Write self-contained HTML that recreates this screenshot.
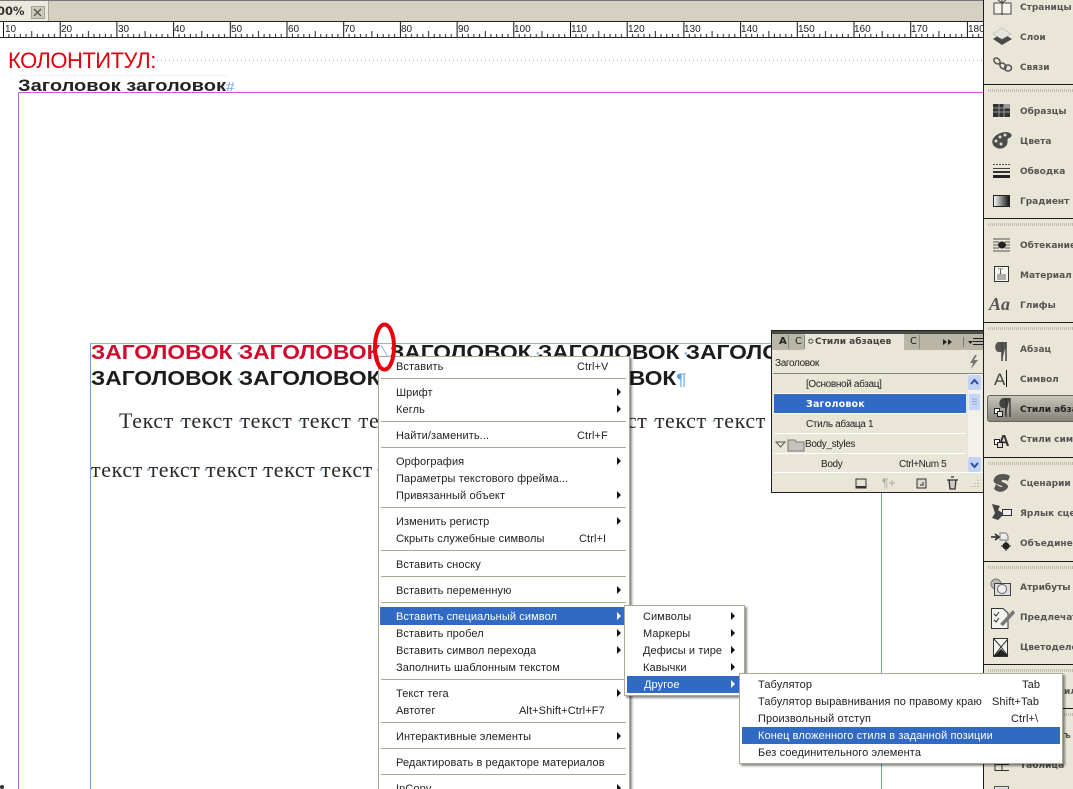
<!DOCTYPE html>
<html lang="ru"><head><meta charset="utf-8"><title>InDesign</title>
<style>
html,body{margin:0;padding:0;background:#fff}
#r{position:relative;width:1073px;height:789px;overflow:hidden;background:#fff;font-family:"Liberation Sans",sans-serif}
#r div,#r svg{position:absolute}
.t{white-space:pre}
.h{font:bold 20px/26px "Liberation Sans",sans-serif;color:#1c1c1c;white-space:pre;transform:scaleX(1.138);transform-origin:0 0}
.s{font:22px/26px "Liberation Serif",serif;color:#2a2a2a;white-space:pre;letter-spacing:.6px}
.h i,.s i{font-style:normal;font-weight:normal;color:#8fa9d0;display:inline-block;width:0;position:relative;left:-.17em}
.m{font:11px/17px "Liberation Sans",sans-serif;color:#222;white-space:pre;height:17px;letter-spacing:.1px;margin-top:2px}
.n{font-size:10px;letter-spacing:-.35px}
.w{color:#fff}
.ar{width:0;height:0;border-left:4px solid #111;border-top:4px solid transparent;border-bottom:4px solid transparent}
.ms{height:1px;background:#aca899}
.hl{background:#316ac5}
.d{left:984px;width:89px;height:1px;background:#1c1c1c}
.o{left:988px;width:85px;height:3px;background:repeating-linear-gradient(90deg,#b5b2a4 0 1px,transparent 1px 2px);opacity:.8}
.l{left:1020px;font:bold 9px/14px "DejaVu Sans",sans-serif;color:#555552;white-space:pre;letter-spacing:0;width:53px;overflow:hidden;margin-top:2px}
.p{font:10px/14px "DejaVu Sans",sans-serif;color:#222;white-space:pre}
</style></head><body><div id="r">

<!-- tab bar -->
<div style="left:0;top:0;width:984px;height:21px;background:#d4d1c2;border-top:1px solid #777;box-sizing:border-box"></div>
<div style="left:0;top:1px;width:48px;height:21px;background:#ebe9dd;border-right:1px solid #a8a698"></div>
<div class="t" style="left:-3px;top:4px;font:bold 11.5px/14px 'DejaVu Sans',sans-serif;color:#333;letter-spacing:0">00%</div>
<div style="left:31px;top:6px;width:12px;height:11px;background:#ccc9ba;border:1px solid #a5a396"></div>
<svg style="left:33px;top:8px" width="9" height="9"><path d="M1 1L8 8M8 1L1 8" stroke="#555" stroke-width="1.3"/></svg>

<!-- ruler -->
<svg style="left:0;top:21px" width="984" height="17">
<defs><pattern id="tk" x="3" y="0" width="56.7" height="17" patternUnits="userSpaceOnUse">
<path d="M0.5 0V16" stroke="#111"/>
<path d="M5.9 13V16M11.6 13V16M17.3 13V16M23 13V16M34.3 13V16M40 13V16M45.7 13V16M51.4 13V16" stroke="#222"/>
<path d="M28.7 10V16" stroke="#222"/>
</pattern></defs>
<rect width="984" height="17" fill="#fff"/>
<rect width="984" height="17" fill="url(#tk)"/>
<path d="M0 .5H984M0 16.5H984" stroke="#222"/>
<g font-family="Liberation Sans" font-size="10" fill="#222">
<text x="5" y="11">10</text><text x="61" y="11">20</text><text x="118" y="11">30</text><text x="174" y="11">40</text><text x="231" y="11">50</text><text x="288" y="11">60</text><text x="344" y="11">70</text><text x="401" y="11">80</text><text x="458" y="11">90</text><text x="514" y="11">100</text><text x="571" y="11">110</text><text x="628" y="11">120</text><text x="684" y="11">130</text><text x="741" y="11">140</text><text x="798" y="11">150</text><text x="854" y="11">160</text><text x="911" y="11">170</text><text x="968" y="11">180</text>
</g></svg>

<!-- page guides -->
<div style="left:157px;top:60px;width:826px;height:1px;background:repeating-linear-gradient(90deg,#8fa9d0 0 1px,transparent 1px 4px)"></div>
<div style="left:18px;top:92px;width:966px;height:1px;background:#c95fcf"></div>
<div style="left:18px;top:92px;width:1px;height:697px;background:#b468cc"></div>
<div style="left:90px;top:343px;width:1px;height:446px;background:#6f9fd8"></div>
<div style="left:90px;top:343px;width:682px;height:1px;background:#8fb4e0"></div>
<div style="left:881px;top:492px;width:1px;height:297px;background:#6f9fd8"></div>
<div style="left:18px;top:75px;width:209px;height:1px;background:#eef1f7"></div>
<div style="left:0;top:785px;width:4px;height:4px;background:#333;border-radius:2px"></div>

<div class="t" style="left:8px;top:48px;font:22px/26px 'Liberation Sans',sans-serif;color:#e1000f;letter-spacing:-.5px">КОЛОНТИТУЛ:</div>
<div class="t" style="left:18px;top:76px;font:bold 17px/20px 'Liberation Sans',sans-serif;color:#222;transform:scaleX(1.18);transform-origin:0 0">Заголовок заголовок<span style="color:#6f9fd8;font-weight:normal;font-size:13px">#</span></div>

<!-- headings -->
<div class="h" style="left:91px;top:340px;color:#cf0a2c">ЗАГОЛОВОК <i>·</i>ЗАГОЛОВОК</div>
<div class="h" style="left:390px;top:340px">ЗАГОЛОВОК <i>·</i>ЗАГОЛОВОК <i>·</i>ЗАГОЛО</div>
<div class="h" style="left:91px;top:366px">ЗАГОЛОВОК <i>·</i>ЗАГОЛОВОК <i>·</i>ЗАГОЛОВОК <i>·</i>ЗАГОЛОВОК<span style="color:#5f9fe0;font-weight:normal;font-size:17px">¶</span></div>
<svg style="left:378px;top:343px" width="14" height="14"><path d="M3 2L10 14" stroke="#8fb4e0" fill="none"/></svg>

<!-- body -->
<div class="s" style="left:119px;top:408px;word-spacing:1.2px">Текст <i>·</i>текст <i>·</i>текст <i>·</i>текст <i>·</i>текст <i>·</i>текст <i>·</i>текст <i>·</i>текст <i>·</i>текст <i>·</i>текст <i>·</i>текст</div>
<div class="s" style="left:91px;top:457px;word-spacing:-.5px">текст <i>·</i>текст <i>·</i>текст <i>·</i>текст <i>·</i>текст <i>·</i>текст</div>

<!-- main menu -->
<div style="left:378px;top:356px;width:252px;height:440px;background:#fff;border:1px solid #aca899;box-sizing:border-box;box-shadow:2px 2px 2px rgba(0,0,0,.45)"></div>
<div class="m" style="left:396px;top:357px">Вставить</div><div class="m" style="left:577px;top:357px">Ctrl+V</div>
<div class="ms" style="left:381px;top:378px;width:245px"></div>
<div class="m" style="left:396px;top:383px">Шрифт</div><div class="ar" style="left:617px;top:388px"></div>
<div class="m" style="left:396px;top:400px">Кегль</div><div class="ar" style="left:617px;top:405px"></div>
<div class="ms" style="left:381px;top:421px;width:245px"></div>
<div class="m" style="left:396px;top:426px">Найти/заменить...</div><div class="m" style="left:577px;top:426px">Ctrl+F</div>
<div class="ms" style="left:381px;top:447px;width:245px"></div>
<div class="m" style="left:396px;top:452px">Орфография</div><div class="ar" style="left:617px;top:457px"></div>
<div class="m" style="left:396px;top:469px">Параметры текстового фрейма...</div>
<div class="m" style="left:396px;top:486px">Привязанный объект</div><div class="ar" style="left:617px;top:491px"></div>
<div class="ms" style="left:381px;top:507px;width:245px"></div>
<div class="m" style="left:396px;top:512px">Изменить регистр</div><div class="ar" style="left:617px;top:517px"></div>
<div class="m" style="left:396px;top:529px">Скрыть служебные символы</div><div class="m" style="left:579px;top:529px">Ctrl+I</div>
<div class="ms" style="left:381px;top:550px;width:245px"></div>
<div class="m" style="left:396px;top:555px">Вставить сноску</div>
<div class="ms" style="left:381px;top:576px;width:245px"></div>
<div class="m" style="left:396px;top:581px">Вставить переменную</div><div class="ar" style="left:617px;top:586px"></div>
<div class="ms" style="left:381px;top:602px;width:245px"></div>
<div class="hl" style="left:380px;top:607px;width:247px;height:18px"></div>
<div class="m w" style="left:396px;top:607px">Вставить специальный символ</div><div class="ar" style="left:617px;top:612px;border-left-color:#fff"></div>
<div class="m" style="left:396px;top:624px">Вставить пробел</div><div class="ar" style="left:617px;top:629px"></div>
<div class="m" style="left:396px;top:641px">Вставить символ перехода</div><div class="ar" style="left:617px;top:646px"></div>
<div class="m" style="left:396px;top:658px">Заполнить шаблонным текстом</div>
<div class="ms" style="left:381px;top:679px;width:245px"></div>
<div class="m" style="left:396px;top:684px">Текст тега</div><div class="ar" style="left:617px;top:689px"></div>
<div class="m" style="left:396px;top:701px">Автотег</div><div class="m" style="left:519px;top:701px">Alt+Shift+Ctrl+F7</div>
<div class="ms" style="left:381px;top:722px;width:245px"></div>
<div class="m" style="left:396px;top:727px">Интерактивные элементы</div><div class="ar" style="left:617px;top:732px"></div>
<div class="ms" style="left:381px;top:748px;width:245px"></div>
<div class="m" style="left:396px;top:753px">Редактировать в редакторе материалов</div>
<div class="ms" style="left:381px;top:774px;width:245px"></div>
<div class="m" style="left:396px;top:779px">InCopy</div><div class="ar" style="left:617px;top:784px"></div>

<!-- red ellipse -->
<svg style="left:372px;top:321px" width="26" height="52"><ellipse cx="12.5" cy="26" rx="9.500" ry="22.500" fill="none" stroke="#e8000c" stroke-width="4"/></svg>

<!-- panel -->
<div style="left:771px;top:330px;width:213px;height:163px;background:#e9e6d8;border:1px solid #222;border-right:0;box-sizing:border-box"></div>
<div style="left:772px;top:334px;width:211px;height:16px;background:#b9b6a6"></div>
<div style="left:772px;top:331px;width:211px;height:3px;background:#4a4a46"></div>
<div style="left:804px;top:334px;width:100px;height:17px;background:#e9e6d8"></div>
<div class="p" style="left:779px;top:335px;font-weight:bold">A</div>
<div style="left:788px;top:335px;width:1px;height:14px;background:#888"></div>
<div class="p" style="left:795px;top:335px">С</div>
<div style="left:804px;top:335px;width:1px;height:14px;background:#888"></div>
<div class="p" style="left:807px;top:335px;font-size:9px;color:#333">≎</div>
<div class="p" style="left:815px;top:335px;font-weight:bold;font-size:9px;color:#444">Стили абзацев</div>
<div class="p" style="left:910px;top:335px">С</div>
<div style="left:919px;top:335px;width:1px;height:14px;background:#888"></div>
<svg style="left:940px;top:336px" width="44" height="12"><path d="M3 3L7 6L3 9ZM8 3L12 6L8 9Z" fill="#222"/><path d="M23.500 1V11" stroke="#777"/><path d="M28 5L33 5L30.500 8Z" fill="#222"/><path d="M33 2.500H43M33 5.500H43M33 8.500H43" stroke="#222"/></svg>
<div class="m n" style="left:775px;top:353px">Заголовок</div>
<svg style="left:968px;top:354px" width="12" height="16"><path d="M7 1L2 9H5L3 15L10 6H6L9 1Z" fill="#777"/></svg>
<div style="left:773px;top:373px;width:210px;height:1px;background:#888"></div>
<div class="hl" style="left:774px;top:394px;width:192px;height:19px"></div>
<div style="left:774px;top:393px;width:192px;height:1px;background:#fff"></div>
<div style="left:774px;top:413px;width:192px;height:1px;background:#fff"></div>
<div style="left:774px;top:433px;width:192px;height:1px;background:#fff"></div>
<div style="left:774px;top:453px;width:192px;height:1px;background:#fff"></div>
<div style="left:774px;top:472px;width:209px;height:1px;background:#fff"></div>
<div class="m n" style="left:806px;top:374px">[Основной абзац]</div>
<div class="m w" style="left:806px;top:394px;font:bold 9.500px/17px 'DejaVu Sans',sans-serif;letter-spacing:.2px">Заголовок</div>
<div class="m n" style="left:806px;top:414px">Стиль абзаца 1</div>
<div class="m n" style="left:805px;top:434px">Body_styles</div>
<div class="m n" style="left:821px;top:454px">Body</div>
<div class="m n" style="left:899px;top:454px">Ctrl+Num 5</div>
<svg style="left:775px;top:437px" width="30" height="15"><path d="M1 5H10L5.500 10Z" fill="none" stroke="#555"/><path d="M13 3H20L21 5H29V14H13Z" fill="#c5c3bb" stroke="#777"/></svg>
<div style="left:968px;top:374px;width:14px;height:98px;background:#f3f2ea"></div>
<div style="left:968px;top:375px;width:13px;height:15px;background:#c3d3f5;border-radius:2px"></div>
<svg style="left:968px;top:375px" width="13" height="15"><path d="M3 9L6.500 5L10 9" stroke="#2d4f9e" stroke-width="2" fill="none"/></svg>
<div style="left:968px;top:393px;width:13px;height:18px;background:#c8d6f6;border-radius:2px;border:1px solid #e8edf9;box-sizing:border-box"></div>
<svg style="left:968px;top:393px" width="13" height="18"><path d="M4 6H9M4 8.500H9M4 11H9" stroke="#8fa6dc"/></svg>
<div style="left:968px;top:457px;width:13px;height:15px;background:#c3d3f5;border-radius:2px"></div>
<svg style="left:968px;top:457px" width="13" height="15"><path d="M3 6L6.500 10L10 6" stroke="#2d4f9e" stroke-width="2" fill="none"/></svg>
<svg style="left:850px;top:474px" width="132" height="17">
<path d="M6 5H16V14H6Z" fill="#e5e3d8" stroke="#333"/><path d="M6 13H16" stroke="#333" stroke-width="2"/>
<text x="32" y="13" font-size="12" fill="#a5a498" font-family="Liberation Sans">¶+</text>
<rect x="67" y="5" width="9" height="9" fill="#dcdad0" stroke="#333"/><path d="M70 11H73V8" stroke="#333" fill="none"/>
<path d="M97 6H108M99 6L100 15H105L106 6M101 3H104" stroke="#333" fill="#cfcdc2" stroke-width="1.3"/>
<path d="M128 6V7M125 9V10M128 9V10M122 12V13M125 12V13M128 12V13" stroke="#999"/>
</svg>

<!-- right dock -->
<div style="left:983px;top:0;width:90px;height:789px;background:#e9e6d8;border-left:1px solid #1c1c1c;box-sizing:border-box"></div>
<div class="d" style="top:84px"></div><div class="o" style="top:89px"></div>
<div class="d" style="top:218px"></div><div class="o" style="top:223px"></div>
<div class="d" style="top:322px"></div><div class="o" style="top:327px"></div>
<div class="d" style="top:457px"></div><div class="o" style="top:462px"></div>
<div class="d" style="top:561px"></div><div class="o" style="top:566px"></div>
<div class="d" style="top:664px"></div><div class="o" style="top:669px"></div>
<div class="d" style="top:708px"></div><div class="o" style="top:713px"></div>
<div style="left:987px;top:395px;width:86px;height:27px;border-radius:3px 0 0 3px;background:linear-gradient(#c8c6b9,#85837a);border:1px solid #66645c;border-right:0;box-sizing:border-box"></div>

<div class="l" style="top:-1px">Страницы</div>
<div class="l" style="top:29px">Слои</div>
<div class="l" style="top:59px">Связи</div>
<div class="l" style="top:103px">Образцы</div>
<div class="l" style="top:133px">Цвета</div>
<div class="l" style="top:163px">Обводка</div>
<div class="l" style="top:193px">Градиент</div>
<div class="l" style="top:237px">Обтекание</div>
<div class="l" style="top:267px">Материал</div>
<div class="l" style="top:297px">Глифы</div>
<div class="l" style="top:341px">Абзац</div>
<div class="l" style="top:371px">Символ</div>
<div class="l" style="top:401px;color:#222">Стили абзацев</div>
<div class="l" style="top:431px">Стили символов</div>
<div class="l" style="top:475px">Сценарии</div>
<div class="l" style="top:505px">Ярлык сценария</div>
<div class="l" style="top:535px">Объединение</div>
<div class="l" style="top:579px">Атрибуты</div>
<div class="l" style="top:609px">Предлечать</div>
<div class="l" style="top:639px">Цветоделение</div>
<div class="l" style="top:683px;left:1064px;width:9px">ил.</div>
<div class="l" style="top:727px;left:1064px;width:9px">ъ</div>
<div class="l" style="top:757px">Таблица</div>

<svg style="left:984px;top:0" width="36" height="789">
<!-- pages -->
<path d="M10 3H18V14H10ZM18 3H27V14H18Z" fill="#f4f3ee" stroke="#444"/><path d="M18 0V15" stroke="#333"/><path d="M14 0L18 3L22 0" fill="none" stroke="#444"/>
<!-- layers -->
<path d="M18 33L28 39L18 45L9 39Z" fill="#4a4a48"/><path d="M18 28L27 34L18 39L9 34Z" fill="#e4e4e0" stroke="#bbb" stroke-width=".7"/>
<!-- links -->
<g fill="none" stroke="#555" stroke-width="1.500"><ellipse cx="13" cy="61" rx="3.500" ry="2.500" transform="rotate(40 13 61)"/><ellipse cx="19" cy="66" rx="3.500" ry="2.500" transform="rotate(40 19 66)"/><ellipse cx="24" cy="68" rx="3.500" ry="3"/></g>
<!-- swatches -->
<rect x="9" y="104" width="17" height="13" fill="#333"/><path d="M15 104V117M20 104V117M9 108H26M9 112H26" stroke="#999"/><rect x="20" y="104" width="6" height="4" fill="#999"/>
<!-- colours -->
<path d="M10 146C5 140 12 133 21 132C29 132 29 137 25 138C22 139 25 143 22 146C18 150 13 149 10 146Z" fill="#4c4c4a"/><circle cx="16" cy="137" r="1.500" fill="#ddd"/><circle cx="21" cy="135" r="1.500" fill="#ddd"/><circle cx="12" cy="141" r="1.500" fill="#ddd"/><circle cx="17" cy="144" r="1.500" fill="#ddd"/>
<!-- stroke -->
<path d="M9 164.500H26" stroke="#555" stroke-dasharray="2 1"/><path d="M9 168.500H26" stroke="#444"/><path d="M9 172H26" stroke="#333" stroke-width="2"/><path d="M9 176.500H26" stroke="#222" stroke-width="3"/>
<!-- gradient -->
<defs><linearGradient id="g"><stop offset="0" stop-color="#fff"/><stop offset="1" stop-color="#111"/></linearGradient></defs>
<rect x="9.500" y="195.500" width="16" height="11" fill="url(#g)" stroke="#222"/>
<!-- wrap -->
<path d="M9 239H26M9 242H15M21 242H26M9 245H15M21 245H26M9 248H15M21 248H26M9 251H26" stroke="#555"/><ellipse cx="18" cy="245" rx="4" ry="3.500" fill="#222"/>
<!-- story -->
<rect x="10.500" y="266.500" width="14" height="15" fill="#f5f5f0" stroke="#333"/><path d="M13 275H22M13 277H22M13 279H22" stroke="#666"/><text x="14" y="274" font-size="8" fill="#333" font-family="Liberation Serif">T</text>
<!-- glyphs -->
<text x="5" y="310" font-family="Liberation Serif" font-style="italic" font-weight="bold" font-size="18" fill="#555">Aa</text>
<!-- para -->
<path d="M23 342H15C10 342 10 352 15 352H18V360" fill="#555"/><path d="M18 342V361M22 342V361" stroke="#444" stroke-width="1.500"/>
<!-- char -->
<text x="10" y="385" font-family="Liberation Sans" font-size="17" fill="#444">A</text><path d="M22.500 370V387" stroke="#111"/>
<!-- para styles -->
<path d="M26 398H20C14 398 14 408 19 408H21V416" fill="#444"/><path d="M22 398V417M26 398V417" stroke="#333" stroke-width="1.300"/><rect x="10.500" y="408.500" width="5" height="5" fill="#fff" stroke="#222"/><rect x="13.500" y="411.500" width="5" height="5" fill="#ddd" stroke="#222"/>
<!-- char styles -->
<text x="14" y="446" font-family="Liberation Sans" font-weight="bold" font-size="16" fill="#333">A</text><rect x="10.500" y="439.500" width="5" height="5" fill="#fff" stroke="#222"/><rect x="13.500" y="442.500" width="5" height="5" fill="#ddd" stroke="#222"/>
<!-- scripts -->
<path d="M10 479C12 473 22 473 26 476L24 481C20 479 16 480 18 482C24 484 27 487 20 491C16 493 12 491 10 489L12 484C15 487 20 488 18 486C13 484 8 483 10 479Z" fill="#555"/>
<!-- script label -->
<path d="M8 504L16 506L14 510L20 514L14 520L8 518L11 513Z" fill="#444"/><rect x="18.500" y="509.500" width="9" height="6" fill="#eee" stroke="#333"/>
<!-- merge -->
<path d="M7 537H13M11 534L15 537L11 540" stroke="#222" fill="none" stroke-width="1.500"/><path d="M16 533H22L24 536V540H16Z" fill="#eee" stroke="#777"/><circle cx="22" cy="546" r="3.500" fill="#222"/><path d="M22 541V551M17 546H27" stroke="#222"/>
<!-- attrs -->
<circle cx="12" cy="584" r="5" fill="#bbb" stroke="#777"/><rect x="10.500" y="583.500" width="16" height="12" fill="#ddd" stroke="#444"/><circle cx="18" cy="589" r="4.500" fill="#f0f0f0" stroke="#666"/>
<!-- preflight -->
<path d="M7.500 608.500H19L24 613V628.500H7.500Z" fill="#f5f5f0" stroke="#333"/><path d="M10 614L12 616L15 612M10 620L12 622L15 618" stroke="#222" fill="none"/><path d="M16 624L29 610L31 613L19 626Z" fill="#777"/>
<!-- separations -->
<rect x="9.500" y="638.500" width="14" height="18" fill="#f2f2ee" stroke="#333"/><path d="M10 639L17 647L24 639M10 656L17 647L24 656" fill="none" stroke="#333"/><path d="M10 656L17 649L24 656Z" fill="#222"/>
<!-- table -->
<path d="M11 764.500H25M11 770.500H25M11 764V771M18 764V771" stroke="#333" fill="none"/>
<rect x="10.500" y="786.500" width="14" height="8" fill="#ddd" stroke="#555"/>
</svg>

<!-- submenu 1 -->
<div style="left:624px;top:605px;width:121px;height:91px;background:#fff;border:1px solid #aca899;box-sizing:border-box;box-shadow:2px 2px 2px rgba(0,0,0,.45)"></div>
<div class="m" style="left:643px;top:607px">Символы</div><div class="ar" style="left:731px;top:612px"></div>
<div class="m" style="left:643px;top:624px">Маркеры</div><div class="ar" style="left:731px;top:629px"></div>
<div class="m" style="left:643px;top:641px">Дефисы и тире</div><div class="ar" style="left:731px;top:646px"></div>
<div class="m" style="left:643px;top:658px">Кавычки</div><div class="ar" style="left:731px;top:663px"></div>
<div class="hl" style="left:627px;top:676px;width:115px;height:17px"></div>
<div class="m w" style="left:644px;top:675px">Другое</div><div class="ar" style="left:731px;top:680px;border-left-color:#fff"></div>

<!-- submenu 2 -->
<div style="left:739px;top:673px;width:324px;height:91px;background:#fff;border:1px solid #aca899;box-sizing:border-box;box-shadow:2px 2px 2px rgba(0,0,0,.45)"></div>
<div class="m" style="left:758px;top:675px">Табулятор</div><div class="m" style="left:1022px;top:675px">Tab</div>
<div class="m" style="left:758px;top:692px">Табулятор выравнивания по правому краю</div><div class="m" style="left:992px;top:692px">Shift+Tab</div>
<div class="m" style="left:758px;top:709px">Произвольный отступ</div><div class="m" style="left:1011px;top:709px">Ctrl+\</div>
<div class="hl" style="left:742px;top:727px;width:318px;height:17px"></div>
<div class="m w" style="left:758px;top:726px">Конец вложенного стиля в заданной позиции</div>
<div class="m" style="left:758px;top:743px">Без соединительного элемента</div>

</div></body></html>
